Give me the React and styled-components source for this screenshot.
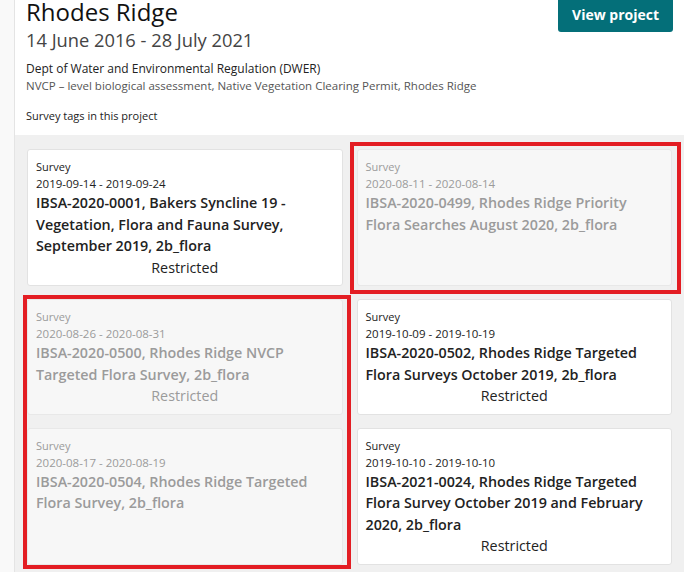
import React from "react";
import styled, { createGlobalStyle } from "styled-components";

const GlobalStyle = createGlobalStyle`
  html, body { margin: 0; padding: 0; background: #ffffff; }
  body { font-family: "Open Sans", "Noto Sans", Arial, sans-serif; color: #222; overflow: hidden; }
  * { box-sizing: border-box; }
`;

const Shell = styled.div`
  display: flex;
  width: 684px;
  height: 572px;
  overflow: hidden;
`;

const Rail = styled.div`
  flex: 0 0 15px;
  background: #f9f9f9;
  border-right: 1px solid #e4e4e4;
`;

const Main = styled.main`
  flex: 1;
  display: flex;
  flex-direction: column;
  min-width: 0;
`;

const Header = styled.header`
  display: flex;
  justify-content: space-between;
  align-items: flex-start;
  padding: 0 11px 11px 11px;
  margin-top: -4px;
  background: #fff;
`;

const Intro = styled.div`
  display: flex;
  flex-direction: column;
`;

const Title = styled.h1`
  margin: 1px 0 0;
  font-size: 24px;
  line-height: 30px;
  font-weight: 500;
  color: #111;
`;

const Period = styled.h2`
  margin: 0;
  font-size: 18.3px;
  line-height: 26px;
  font-weight: 500;
  color: #444;
`;

const Meta = styled.p`
  margin: ${(p) => p.$gap || 0} 0 0;
  font-size: ${(p) => p.$size || "12px"};
  line-height: 17px;
  color: ${(p) => p.$tone || "#222"};
`;

const ViewButton = styled.button`
  height: 36px;
  padding: 0 14px;
  border: none;
  border-radius: 3px;
  background: #046f79;
  color: #fff;
  font-family: inherit;
  font-size: 14px;
  font-weight: 700;
  cursor: pointer;
`;

const Board = styled.section`
  flex: 1;
  background: #f0f0f0;
  padding: 14px 12px;
`;

const Grid = styled.div`
  display: grid;
  grid-template-columns: 1fr 1fr;
  column-gap: 14px;
  row-gap: 13px;
`;

const Card = styled.article`
  grid-column: ${(p) => p.$col};
  grid-row: ${(p) => p.$row};
  display: flex;
  flex-direction: column;
  padding: 8px 8px 7px;
  border: 1px solid ${(p) => (p.$muted ? "#e8e8e8" : "#e2e2e2")};
  border-radius: 3px;
  background: ${(p) => (p.$muted ? "#f7f7f7" : "#ffffff")};
  color: ${(p) => (p.$muted ? "#9b9b9b" : "#222")};
`;

const Kind = styled.div`
  font-size: 11px;
  line-height: 17px;
`;

const Dates = styled.div`
  font-size: 11.5px;
  line-height: 17px;
`;

const Name = styled.div`
  font-size: 14.3px;
  line-height: 21.5px;
  font-weight: 600;
`;

const Access = styled.div`
  font-size: 14.3px;
  line-height: 21.5px;
  text-align: center;
`;

const Highlight = styled.div`
  grid-column: ${(p) => p.$col};
  grid-row: ${(p) => p.$row};
  margin: ${(p) => p.$outset};
  border: 4px solid #e31d23;
  pointer-events: none;
  z-index: 1;
`;

const surveys = [
  { col: 1, row: 1, dates: "2019-09-14 - 2019-09-24", name: "IBSA-2020-0001, Bakers Syncline 19 - Vegetation, Flora and Fauna Survey, September 2019, 2b_flora", restricted: true },
  { col: 2, row: 1, dates: "2020-08-11 - 2020-08-14", name: "IBSA-2020-0499, Rhodes Ridge Priority Flora Searches August 2020, 2b_flora", muted: true },
  { col: 1, row: 2, dates: "2020-08-26 - 2020-08-31", name: "IBSA-2020-0500, Rhodes Ridge NVCP Targeted Flora Survey, 2b_flora", muted: true, restricted: true },
  { col: 2, row: 2, dates: "2019-10-09 - 2019-10-19", name: "IBSA-2020-0502, Rhodes Ridge Targeted Flora Surveys October 2019, 2b_flora", restricted: true },
  { col: 1, row: 3, dates: "2020-08-17 - 2020-08-19", name: "IBSA-2020-0504, Rhodes Ridge Targeted Flora Survey, 2b_flora", muted: true },
  { col: 2, row: 3, dates: "2019-10-10 - 2019-10-10", name: "IBSA-2021-0024, Rhodes Ridge Targeted Flora Survey October 2019 and February 2020, 2b_flora", restricted: true },
];

const marks = [
  { col: 2, row: "1", outset: "-7px -9px -8px -7px" },
  { col: 1, row: "2 / span 2", outset: "-4px -8px -4px -4px" },
];

export default function App() {
  return (
    <>
      <GlobalStyle />
      <Shell>
        <Rail />
        <Main>
          <Header>
            <Intro>
              <Title>Rhodes Ridge</Title>
              <Period>14 June 2016 - 28 July 2021</Period>
              <Meta $gap="7px">Dept of Water and Environmental Regulation (DWER)</Meta>
              <Meta $tone="#555" $size="11.5px">NVCP – level biological assessment, Native Vegetation Clearing Permit, Rhodes Ridge</Meta>
              <Meta $gap="13px" $size="11px">Survey tags in this project</Meta>
            </Intro>
            <ViewButton>View project</ViewButton>
          </Header>
          <Board>
            <Grid>
              {surveys.map((s) => (
                <Card key={s.name} $col={s.col} $row={s.row} $muted={s.muted}>
                  <Kind>Survey</Kind>
                  <Dates>{s.dates}</Dates>
                  <Name>{s.name}</Name>
                  {s.restricted && <Access>Restricted</Access>}
                </Card>
              ))}
              {marks.map((m) => (
                <Highlight key={m.row + m.col} $col={m.col} $row={m.row} $outset={m.outset} />
              ))}
            </Grid>
          </Board>
        </Main>
      </Shell>
    </>
  );
}
